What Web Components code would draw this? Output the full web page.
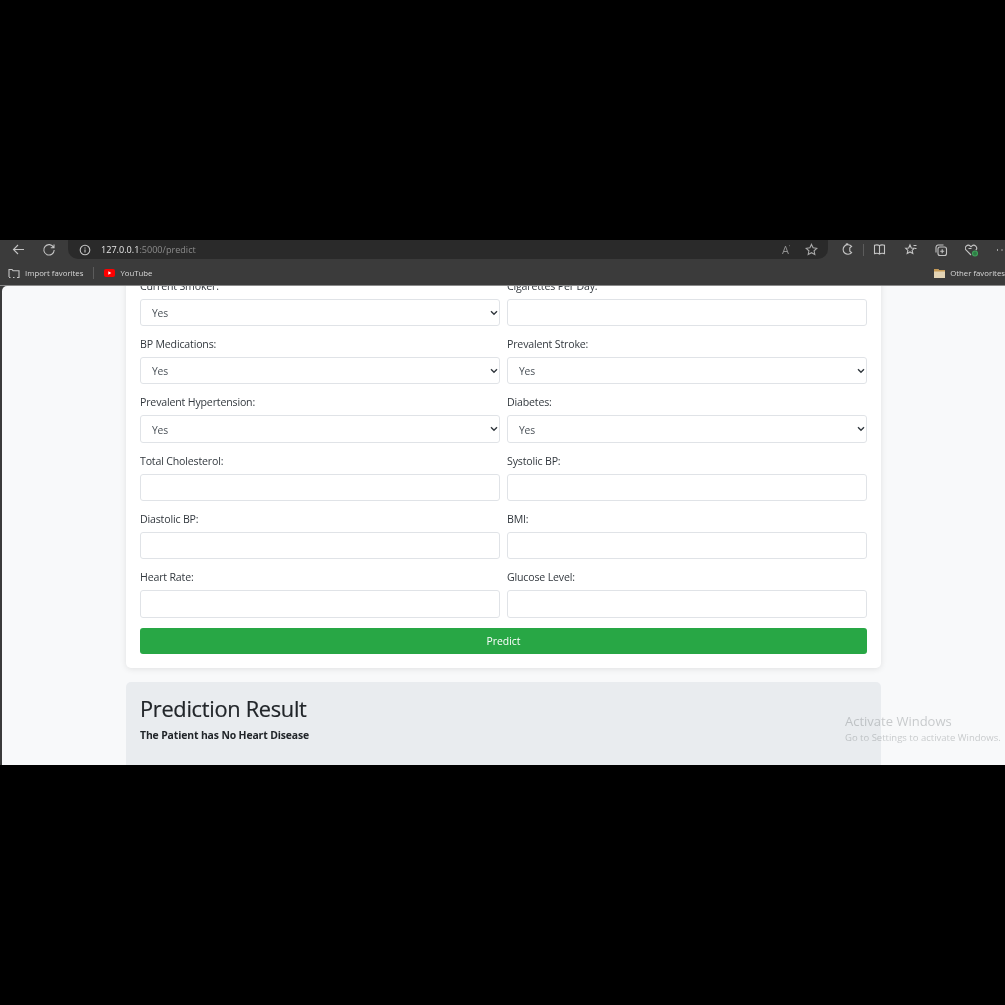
<!DOCTYPE html>
<html>
<head>
<meta charset="utf-8">
<title>Heart Disease Prediction</title>
<style>
  html, body { margin: 0; height: 100%; background: #000; }
  body { padding-top: 240px; box-sizing: border-box; font-family: "Open Sans", "Liberation Sans", sans-serif; }
</style>
</head>
<body>
<browser-frame>
  <form-card>
    <form-field label="Current Smoker:" type="select"></form-field>
    <form-field label="Cigarettes Per Day:"></form-field>
    <form-field label="BP Medications:" type="select"></form-field>
    <form-field label="Prevalent Stroke:" type="select"></form-field>
    <form-field label="Prevalent Hypertension:" type="select"></form-field>
    <form-field label="Diabetes:" type="select"></form-field>
    <form-field label="Total Cholesterol:"></form-field>
    <form-field label="Systolic BP:"></form-field>
    <form-field label="Diastolic BP:"></form-field>
    <form-field label="BMI:"></form-field>
    <form-field label="Heart Rate:"></form-field>
    <form-field label="Glucose Level:"></form-field>
  </form-card>
  <result-card title="Prediction Result" message="The Patient has No Heart Disease"></result-card>
</browser-frame>

<script>
class BrowserFrame extends HTMLElement {
  connectedCallback() {
    this.attachShadow({ mode: 'open' });
    this.shadowRoot.innerHTML = `
      <style>
        :host {
          display: flex;
          flex-direction: column;
          height: 525px;
          background: #3b3b3b;
          color: #d8d8d8;
          position: relative;
          overflow: hidden;
          filter: blur(0.45px);
        }
        svg { display: block; fill: none; stroke: #c4c4c4; stroke-width: 1.1; flex: none; }
        .toolbar {
          height: 22px;
          display: flex;
          align-items: flex-start;
          padding-left: 11px;
        }
        .nav { height: 19px; display: flex; align-items: center; gap: 16px; width: 57px; flex: none; }
        .address {
          flex: none;
          width: 760px;
          height: 19px;
          background: #2a2a2a;
          border-radius: 0 0 10px 10px;
          display: flex;
          align-items: center;
          padding: 0 10px 0 11px;
          box-sizing: border-box;
          font-size: 9.1px;
          color: #8b8b8b;
        }
        .address svg { margin-right: 10px; }
        .address b { color: #e6e6e6; font-weight: 500; }
        .address .spacer { flex: 1; }
        .address .right { display: flex; gap: 15px; align-items: center; }
        .address .right svg { margin: 0; stroke: #a8a8a8; }
        .aa { font-size: 11px; color: #8f8f8f; }
        .tools { height: 19px; display: flex; align-items: center; margin-left: 13px; gap: 17px; flex: none; }
        .sep { width: 1px; height: 12px; background: #5c5c5c; margin: 0 -8px; }
        .bookmarks {
          height: 23px;
          display: flex;
          align-items: center;
          font-size: 7.8px;
          line-height: 10px;
          padding: 0 0 1px 8px;
          box-sizing: border-box;
          border-bottom: 1px solid #8a8a8a;
          height: 24px;
          white-space: nowrap;
        }
        .bookmarks .item { display: flex; align-items: center; gap: 5px; }
        .bookmarks .sep { margin: 0 10px; height: 12px; }
        .bookmarks .spacer { flex: 1; }
        .page {
          flex: 1;
          min-height: 0;
          margin-left: 2px;
          background: #f8f9fa;
          border-top-left-radius: 5px;
          overflow: hidden;
          padding-left: 124px;
          color: #212529;
        }
        .scroll { width: 755px; margin-top: -9.3px; }
        .watermark {
          position: absolute;
          left: 845px;
          top: 472px;
          color: rgba(120, 125, 130, 0.38);
          white-space: nowrap;
        }
        .watermark div:first-child { font-size: 13px; line-height: 18px; }
        .watermark div:last-child { font-size: 9.5px; line-height: 14px; margin-top: 1px; }
      </style>
      <div class="toolbar">
        <div class="nav">
          <svg width="15" height="15" viewBox="0 0 15 15"><path d="M13 7.5H2.500M7 3 2.500 7.500 7 12"/></svg>
          <svg width="14" height="14" viewBox="0 0 14 14"><path d="M11.600 4.400A5.200 5.200 0 1 0 12.200 7M12 1.600v3.200H8.800"/></svg>
        </div>
        <div class="address">
          <svg width="12" height="12" viewBox="0 0 12 12"><circle cx="6" cy="6" r="4.800"/><path d="M6 5.400v3M6 3.400v1"/></svg>
          <span><b>127.0.0.1</b>:5000/predict</span>
          <span class="spacer"></span>
          <span class="right">
            <span class="aa">A<sup style="font-size:6px">&#8217;</sup></span>
            <svg width="13" height="13" viewBox="0 0 13 13"><path d="m6.500 1.400 1.600 3.400 3.700.5-2.700 2.500.7 3.700-3.300-1.800-3.300 1.800.7-3.700L1.200 5.300l3.700-.5z"/></svg>
          </span>
        </div>
        <div class="tools">
          <svg width="13" height="13" viewBox="0 0 13 13"><path d="M10.600 3.400A4.800 4.800 0 1 0 10.600 9.600L8.800 8.200V4.800zM5 1.400c0-.8 2-.8 2 0"/></svg>
          <span class="sep"></span>
          <svg width="13" height="13" viewBox="0 0 13 13"><path d="M6.500 2.600C5.400 1.800 3 1.800 1.500 2.200v8.400c1.500-.4 3.900-.4 5 .4 1.100-.8 3.500-.8 5-.4V2.200c-1.500-.4-3.900-.4-5 .4zM6.500 2.600V11"/></svg>
          <svg width="14" height="14" viewBox="-1.500 0 14 14"><path d="m5.500 2 1.300 3 3 .3-2.200 2.100.7 3.100-2.800-1.600-2.800 1.600.7-3.100L1.200 5.300l3-.3zM9 2.500h3M10.500 5.500h1.500"/></svg>
          <svg width="14" height="14" viewBox="0 0 14 14"><rect x="4" y="4" width="8.500" height="8.500" rx="2"/><path d="M2 9.500V4a2.500 2.500 0 0 1 2-2h5.500M8.200 6.200v4M6.200 8.200h4"/></svg>
          <svg width="15" height="14" viewBox="1 0 15 14"><path d="M7 12 2.200 7.200a2.900 2.900 0 0 1 4.100-4.100L7 3.800l.7-.7a2.900 2.900 0 0 1 4.100 4.100M4.500 5.500h3"/><circle cx="11" cy="10.500" r="2.500" stroke="#3fa35a" fill="#2f7d46"/></svg>
          <svg width="12" height="12" viewBox="0 0 12 12" style="margin-left:-1px"><path d="M1 6h1M5.500 6h1M10 6h1" stroke-width="1.500"/></svg>
        </div>
      </div>
      <div class="bookmarks">
        <span class="item">
          <svg width="12" height="11" viewBox="0 0 12 11"><path d="M1 9V1.500h3l1 1.200h6V9.500H9M1 9.500h1.500M5 9.500h1.500"/></svg>
          <span>Import favorites</span>
        </span>
        <span class="sep"></span>
        <span class="item">
          <svg width="11" height="8" viewBox="0 0 11 8" style="stroke:none"><rect width="11" height="8" rx="2" fill="#f00"/><path d="M4.300 2.200 7.300 4 4.300 5.800z" fill="#fff"/></svg>
          <span>YouTube</span>
        </span>
        <span class="spacer"></span>
        <span class="item">
          <svg width="11" height="10" viewBox="0 0 11 10" style="stroke:none"><path d="M0 1h4l1 1h6v8H0z" fill="#e3d4b5"/><path d="M0 1h4l1 1h6v1.500H0z" fill="#c79a55"/></svg>
          <span>Other favorites</span>
        </span>
      </div>
      <div class="page"><div class="scroll"><slot></slot></div></div>
      <div class="watermark"><div>Activate Windows</div><div>Go to Settings to activate Windows.</div></div>
    `;
  }
}

class FormCard extends HTMLElement {
  connectedCallback() {
    this.attachShadow({ mode: 'open' });
    this.shadowRoot.innerHTML = `
      <style>
        :host {
          display: block;
          background: #fff;
          border-radius: 0 0 5px 5px;
          box-shadow: 0 1px 6px rgba(0, 0, 0, 0.1);
          padding: 0 14px 14px;
        }
        .grid {
          display: grid;
          grid-template-columns: 360px 360px;
          column-gap: 7px;
          row-gap: 9px;
        }
        button {
          display: block;
          width: 100%;
          height: 26.5px;
          margin-top: 10.3px;
          padding: 0;
          border: 0;
          border-radius: 3px;
          background: #28a745;
          color: #fff;
          font: inherit;
          font-size: 10.4px;
        }
      </style>
      <div class="grid"><slot></slot></div>
      <button type="button">Predict</button>
    `;
  }
}

class FormField extends HTMLElement {
  connectedCallback() {
    const label = this.getAttribute('label');
    const control = this.getAttribute('type') === 'select'
      ? `<div class="box"><select><option>Yes</option><option>No</option></select>
           <svg width="8" height="6" viewBox="0 0 8 6"><path d="M1 1.300 4 4.300 7 1.300" fill="none" stroke="#343a40" stroke-width="1.400"/></svg></div>`
      : `<div class="box"><input type="text"></div>`;
    this.attachShadow({ mode: 'open' });
    this.shadowRoot.innerHTML = `
      <style>
        :host { display: block; }
        label { display: block; height: 18px; line-height: 19px; margin-bottom: 4px; font-size: 10.6px; letter-spacing: -0.17px; color: #33393f; white-space: nowrap; }
        .box { position: relative; height: 27.33px; }
        input, select {
          display: block;
          width: 100%;
          height: 100%;
          box-sizing: border-box;
          border: 1px solid #e0e3e7;
          border-radius: 3px;
          background: #fff;
          color: #495057;
          font: inherit;
          font-size: 10.3px;
          letter-spacing: -0.2px;
          padding: 1px 11px 0;
          margin: 0;
          appearance: none;
          outline: 0;
        }
        svg { position: absolute; right: 2px; top: 11px; }
      </style>
      <label>${label}</label>
      ${control}
    `;
  }
}

class ResultCard extends HTMLElement {
  connectedCallback() {
    this.attachShadow({ mode: 'open' });
    this.shadowRoot.innerHTML = `
      <style>
        :host {
          display: block;
          margin-top: 14px;
          height: 120px;
          padding: 0 14px;
          background: #e9ecef;
          border-radius: 5px;
          color: #212529;
        }
        h2 { margin: 0; padding-top: 12px; font-size: 21.8px; letter-spacing: -0.3px; line-height: 30px; font-weight: 500; white-space: nowrap; -webkit-text-stroke: 0.2px #212529; }
        p { margin: 4px 0 0; font-size: 10.4px; letter-spacing: -0.12px; line-height: 15px; font-weight: 700; white-space: nowrap; }
      </style>
      <h2>${this.getAttribute('title')}</h2>
      <p>${this.getAttribute('message')}</p>
    `;
  }
}

customElements.define('browser-frame', BrowserFrame);
customElements.define('form-card', FormCard);
customElements.define('form-field', FormField);
customElements.define('result-card', ResultCard);
</script>
</body>
</html>
